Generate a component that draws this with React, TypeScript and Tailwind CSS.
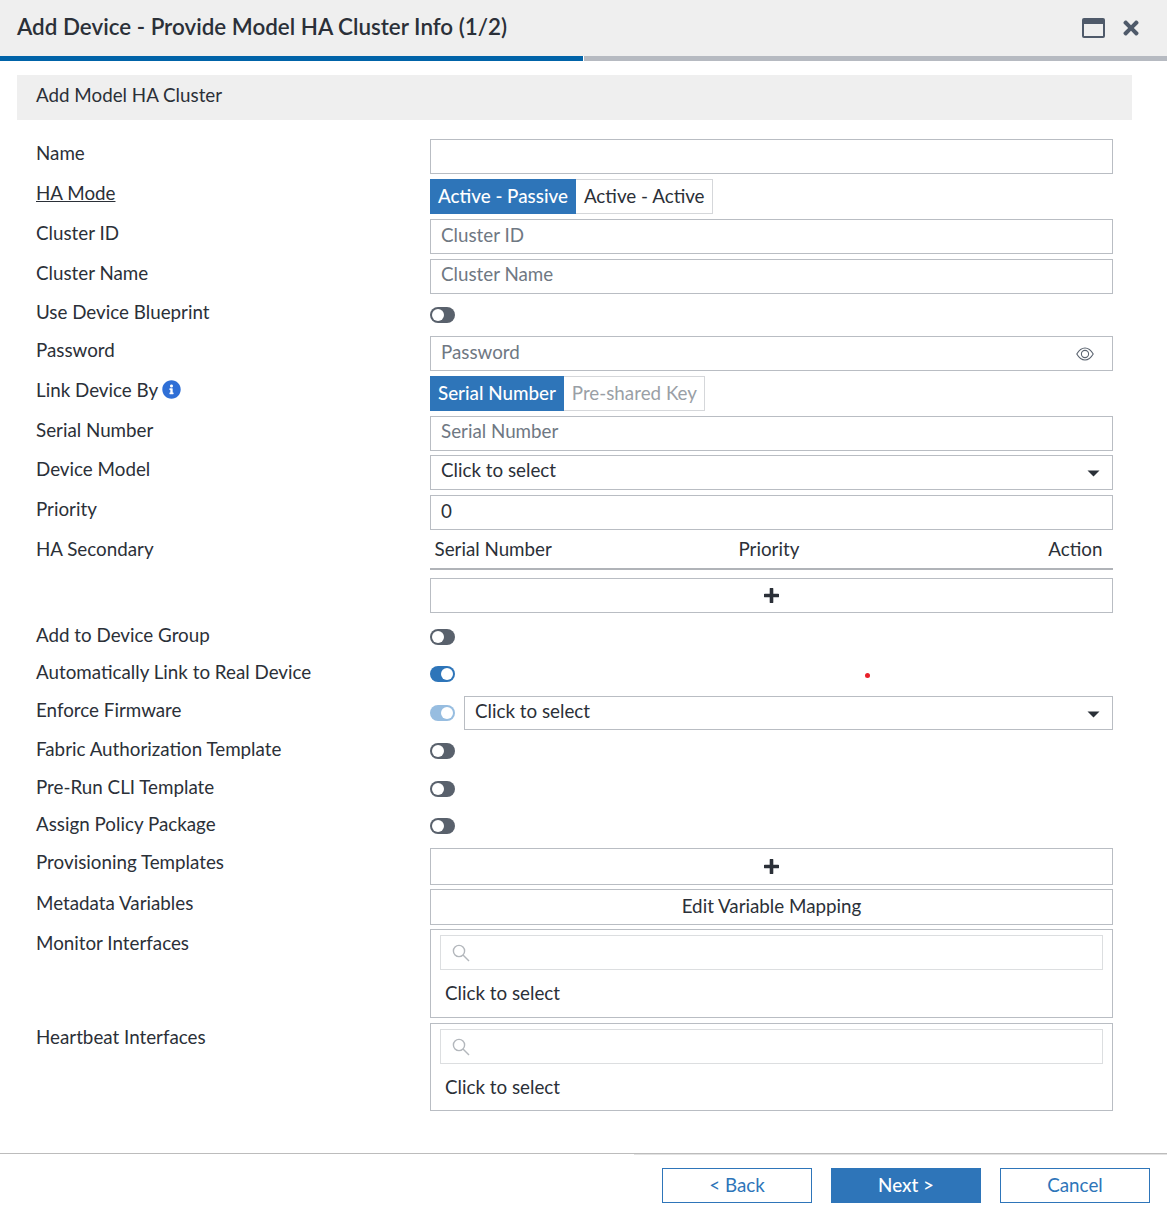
import React from 'react';
import { FaInfoCircle, FaTimes } from 'react-icons/fa';

const boxBase = 'h-[35px] w-[683px] border border-[#b9bdc3] bg-white flex items-center';

const Row: React.FC<{ label: React.ReactNode; height: string; children?: React.ReactNode }> = ({ label, height, children }) => (
  <div className={`flex ${height}`}>
    <div className="w-[394px] shrink-0 leading-[28px] text-[#2b3038]">{label}</div>
    <div className="w-[683px]">{children}</div>
  </div>
);

const Toggle: React.FC<{ state?: 'off' | 'on' | 'disabled' }> = ({ state = 'off' }) => {
  if (state === 'off') {
    return (
      <div className="flex h-[16px] w-[25px] justify-start rounded-full bg-[#59616c] p-[2px]">
        <div className="h-[12px] w-[12px] rounded-full bg-white" />
      </div>
    );
  }
  return (
    <div className={`flex h-[16px] w-[25px] justify-end rounded-full p-[2px] ${state === 'on' ? 'bg-[#2e75b9]' : 'bg-[#97bde0]'}`}>
      <div className="h-[12px] w-[12px] rounded-full bg-white" />
    </div>
  );
};

const Caret = () => (
  <svg width="13" height="7" viewBox="0 0 13 7" className="ml-auto mr-[12px] mt-[2px]">
    <path d="M0.5 0.5h12L6.5 6.5z" fill="#2b3038" />
  </svg>
);

// lift: some rows sit a pixel higher in the reference
const TextBox: React.FC<{ placeholder?: string; value?: string; lift?: boolean; children?: React.ReactNode }> = ({ placeholder, value, lift, children }) => (
  <div className={`${boxBase} pl-[10px]`}>
    {placeholder && <span className={`${lift ? 'pb-[4px]' : 'pb-[2px]'} text-[#6f7883]`}>{placeholder}</span>}
    {value && <span className={`${lift ? 'pb-[4px]' : 'pb-[2px]'} text-[#2b3038]`}>{value}</span>}
    {children}
  </div>
);

const Segment: React.FC<{ active: string; other: string; muted?: boolean }> = ({ active, other, muted }) => (
  <div className="flex h-[35px]">
    <div className="flex items-center bg-[#2e75b9] px-[8px] pb-[1px] font-medium text-white">{active}</div>
    <div className={`flex items-center border border-l-0 border-[#d5d7da] pb-[1px] pl-[8px] pr-[7px] ${muted ? 'text-[#9a9fa6]' : 'text-[#2b3038]'}`}>{other}</div>
  </div>
);

const SearchSelect: React.FC<{ height: string }> = ({ height }) => (
  <div className={`w-[683px] border border-[#b9bdc3] px-[9px] pt-[5px] ${height}`}>
    <div className="flex h-[35px] items-center border border-[#dcdee0] pl-[11px]">
      <svg width="18" height="18" viewBox="0 0 18 18" fill="none" stroke="#b3b7bc" strokeWidth="1.4">
        <circle cx="7" cy="7" r="5.6" />
        <path d="M11 11l6 6" />
      </svg>
    </div>
    <div className="pl-[5px] pt-[11px] leading-[24px] text-[#2b3038]">Click to select</div>
  </div>
);

const PlusBox: React.FC<{ height: string }> = ({ height }) => (
  <div className={`flex w-[683px] items-center justify-center border border-[#b9bdc3] ${height}`}>
    <svg width="15" height="15" viewBox="0 0 15 15">
      <path d="M7.5 1v13M1 7.5h13" stroke="#2b3038" strokeWidth="3.6" strokeLinecap="round" />
    </svg>
  </div>
);

const FooterButton: React.FC<{ children: React.ReactNode; primary?: boolean }> = ({ children, primary }) => (
  <button className={`h-[35px] w-[150px] border border-[#2e75b9] ${primary ? 'bg-[#2e75b9] font-medium text-white' : 'bg-white text-[#2e75b9]'}`}>
    {children}
  </button>
);

export default function App() {
  return (
    <div className="relative h-[1216px] w-[1167px] overflow-hidden bg-white font-['Lato',sans-serif] text-[18.8px]">
      {/* Title bar */}
      <div className="flex h-[56px] items-center bg-[#efefef] pl-[17px] pr-[25px]">
        <h1 className="pb-[3px] text-[22.4px] font-semibold text-[#2b3038]">Add Device - Provide Model HA Cluster Info (1/2)</h1>
        <div className="ml-auto flex items-center gap-[15px]">
          <svg width="23" height="20" viewBox="0 0 23 20">
            <rect width="23" height="20" rx="2" fill="#4f5a6a" />
            <rect x="2" y="6" width="19" height="12" fill="#efefef" />
          </svg>
          <FaTimes size={22} className="text-[#4f5a6a]" />
        </div>
      </div>
      <div className="flex h-[5px]">
        <div className="w-[583px] bg-[#0063a8]" />
        <div className="ml-px flex-1 bg-[#b6bac1]" />
      </div>

      {/* Section header */}
      <div className="ml-[17px] mt-[14px] flex h-[45px] w-[1115px] items-center bg-[#efefef] pb-[4px] pl-[19px] text-[#2b3038]">Add Model HA Cluster</div>

      {/* Form */}
      <div className="mt-[19px] pl-[36px]">
        <Row label="Name" height="h-[40px]"><TextBox /></Row>
        <Row label={<span className="underline">HA Mode</span>} height="h-[40px]">
          <Segment active="Active - Passive" other="Active - Active" />
        </Row>
        <Row label="Cluster ID" height="h-[40px]"><TextBox placeholder="Cluster ID" /></Row>
        <Row label="Cluster Name" height="h-[39px]"><TextBox placeholder="Cluster Name" lift /></Row>
        <Row label="Use Device Blueprint" height="h-[38px]"><div className="pt-[9px]"><Toggle /></div></Row>
        <Row label="Password" height="h-[40px]">
          <TextBox placeholder="Password">
            <svg width="18" height="14" viewBox="0 0 18 14" fill="none" stroke="#5b6470" strokeWidth="1.1" className="ml-auto mr-[18px]">
              <path d="M0.8 7C3 3.2 5.8 1 9 1s6 2.2 8.2 6C15 10.8 12.2 13 9 13S3 10.8 0.8 7z" />
              <circle cx="9" cy="7" r="3.6" />
            </svg>
          </TextBox>
        </Row>
        <Row
          label={
            <span className="flex items-center gap-[4px]">
              Link Device By <FaInfoCircle size={19} className="mb-[1px] text-[#2f6fd6]" />
            </span>
          }
          height="h-[40px]"
        >
          <Segment active="Serial Number" other="Pre-shared Key" muted />
        </Row>
        <Row label="Serial Number" height="h-[39px]"><TextBox placeholder="Serial Number" lift /></Row>
        <Row label="Device Model" height="h-[40px]">
          <TextBox value="Click to select" lift><Caret /></TextBox>
        </Row>
        <Row label="Priority" height="h-[40px]"><TextBox value="0" /></Row>
        <Row label="HA Secondary" height="h-[86px]">
          <div className="flex h-[35px] w-[683px] items-center border-b-2 border-[#b0b3b8] pb-[4px] pl-[4.5px] pr-[10.5px] text-[#2b3038]">
            <span className="w-[304px]">Serial Number</span>
            <span>Priority</span>
            <span className="ml-auto">Action</span>
          </div>
          <div className="pt-[8px]"><PlusBox height="h-[35px]" /></div>
        </Row>
        <Row label="Add to Device Group" height="h-[37px]"><div className="pt-[8px]"><Toggle /></div></Row>
        <Row label="Automatically Link to Real Device" height="h-[38px]"><div className="pt-[8px]"><Toggle state="on" /></div></Row>
        <Row label="Enforce Firmware" height="h-[39px]">
          <div className="flex items-center gap-[9px]">
            <Toggle state="disabled" />
            <div className="flex h-[34px] w-[649px] items-center border border-[#b9bdc3] pl-[10px] text-[#2b3038]">
              <span className="pb-[4px]">Click to select</span>
              <Caret />
            </div>
          </div>
        </Row>
        <Row label="Fabric Authorization Template" height="h-[38px]"><div className="pt-[8px]"><Toggle /></div></Row>
        <Row label="Pre-Run CLI Template" height="h-[37px]"><div className="pt-[8px]"><Toggle /></div></Row>
        <Row label="Assign Policy Package" height="h-[38px]"><div className="pt-[8px]"><Toggle /></div></Row>
        <Row label="Provisioning Templates" height="h-[41px]"><PlusBox height="h-[37px]" /></Row>
        <Row label="Metadata Variables" height="h-[40px]">
          <div className="flex h-[36px] w-[683px] items-center justify-center border border-[#b9bdc3] pb-[2px] text-[#2b3038]">Edit Variable Mapping</div>
        </Row>
        <Row label="Monitor Interfaces" height="h-[94px]"><SearchSelect height="h-[89px]" /></Row>
        <Row label="Heartbeat Interfaces" height="h-[88px]"><SearchSelect height="h-[88px]" /></Row>
      </div>

      {/* Footer */}
      <div className="mt-[42px] h-px bg-[#bcbcbc]" />
      <div className="ml-[634px] h-px bg-[#e2e2e2]" />
      <div className="flex justify-end gap-[19px] pr-[17px] pt-[13px]">
        <FooterButton>&lt; Back</FooterButton>
        <FooterButton primary>Next &gt;</FooterButton>
        <FooterButton>Cancel</FooterButton>
      </div>

      {/* Stray red dot present in the capture */}
      <div className="absolute left-[865px] top-[673px] h-[5px] w-[5px] rounded-full bg-[#e8202a]" />
    </div>
  );
}
